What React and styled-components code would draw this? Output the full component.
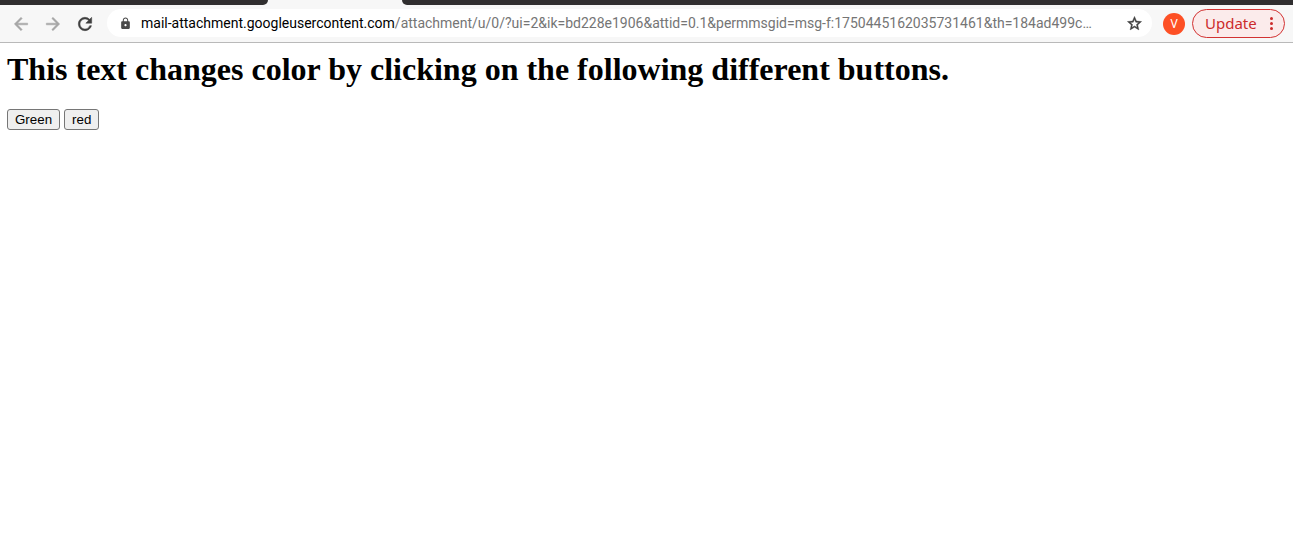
import React, { useState } from "react";
import styled, { createGlobalStyle } from "styled-components";
import { MdArrowBack, MdArrowForward, MdRefresh, MdLock, MdStarBorder } from "react-icons/md";

const GlobalStyle = createGlobalStyle`
  * { box-sizing: border-box; }
  body { margin: 0; background: #fff; }
`;

const TabStrip = styled.div`
  display: flex;
  height: 5px;
  background: #f7f7f7;
`;

const StripSegment = styled.div`
  flex: ${(p) => (p.$grow ? "1" : "0 0 268px")};
  background: #302e2f;
  border-radius: ${(p) => (p.$grow ? "0 0 0 5px" : "0 0 5px 0")};
`;

const ActiveTab = styled.div`
  flex: 0 0 134px;
`;

const Toolbar = styled.header`
  display: flex;
  align-items: center;
  padding: 4px 8px 4px 10px;
  background: #f7f7f7;
  border-bottom: 1px solid #b9b9b9;
`;

const NavGroup = styled.nav`
  display: flex;
  gap: 10px;
  margin-right: 11px;
`;

const IconButton = styled.button`
  display: flex;
  align-items: center;
  justify-content: center;
  width: 22px;
  height: 22px;
  padding: 0;
  border: 0;
  background: none;
  color: ${(p) => (p.$dim ? "#a6a6a6" : "#3f3f3f")};
  flex: none;

  path:not([fill="none"]) {
    stroke: currentColor;
    stroke-width: 0.6;
  }
`;

const AddressBar = styled.div`
  display: flex;
  align-items: center;
  align-self: flex-start;
  flex: 1;
  min-width: 0;
  height: 28px;
  padding: 0 7px 0 12px;
  border-radius: 14px;
  background: #fff;
  color: #4a4a4a;
`;

const Address = styled.div`
  flex: 1;
  min-width: 0;
  margin: 0 8px 0 9px;
  overflow: hidden;
  white-space: nowrap;
  font-family: Roboto, sans-serif;
  font-size: 14px;
  line-height: 20px;
  color: #757575;
`;

const Host = styled.span`
  color: #000;
`;

const Avatar = styled.button`
  width: 22px;
  height: 22px;
  margin: 0 7px 0 11px;
  padding: 0;
  border: 0;
  border-radius: 50%;
  background: #fd5025;
  color: #fff;
  font: 12px/22px "Noto Sans", sans-serif;
`;

const UpdateButton = styled.button`
  display: flex;
  align-items: center;
  justify-content: space-between;
  width: 93px;
  height: 29px;
  padding: 0 11px 0 12px;
  border: 1px solid #d23232;
  border-radius: 15px;
  background: #fbebeb;
  color: #cc2b2b;
  font: 15px/20px "Noto Sans", sans-serif;
`;

const UpdateLabel = styled.span`
  padding-bottom: 2px;
`;

const Page = styled.main`
  padding: 8px 7px;
`;

const Title = styled.h1`
  margin: 0 0 21px;
  font: bold 32px/37px "Liberation Serif", serif;
  color: ${(p) => p.$color};
`;

const Choices = styled.div`
  display: flex;
  gap: 4px;
`;

const ColorButton = styled.button`
  height: 21px;
  padding: 0 7px;
  border: 1px solid #767676;
  border-radius: 3px;
  background: #efefef;
  color: #000;
  font-family: "Liberation Sans", sans-serif;
`;

export default function App() {
  const [color, setColor] = useState("#000");
  return (
    <>
      <GlobalStyle />
      <TabStrip>
        <StripSegment />
        <ActiveTab />
        <StripSegment $grow />
      </TabStrip>
      <Toolbar>
        <NavGroup aria-label="History">
          <IconButton $dim aria-label="Back"><MdArrowBack size={20} /></IconButton>
          <IconButton $dim aria-label="Forward"><MdArrowForward size={20} /></IconButton>
          <IconButton aria-label="Reload"><MdRefresh size={20} /></IconButton>
        </NavGroup>
        <AddressBar>
          <MdLock size={13} />
          <Address role="textbox" aria-label="Address" tabIndex={0}>
            <Host>mail-attachment.googleusercontent.com</Host>
            /attachment/u/0/?ui=2&amp;ik=bd228e1906&amp;attid=0.1&amp;permmsgid=msg-f:1750445162035731461&amp;th=184ad499c…
          </Address>
          <IconButton aria-label="Bookmark this page"><MdStarBorder size={17} /></IconButton>
        </AddressBar>
        <Avatar aria-label="Profile V">V</Avatar>
        <UpdateButton>
          <UpdateLabel>Update</UpdateLabel>
          <svg width="3" height="13" viewBox="0 0 3 13" fill="currentColor" aria-hidden="true">
            <circle cx="1.5" cy="1.5" r="1.5" />
            <circle cx="1.5" cy="6.5" r="1.5" />
            <circle cx="1.5" cy="11.5" r="1.5" />
          </svg>
        </UpdateButton>
      </Toolbar>
      <Page>
        <Title $color={color}>This text changes color by clicking on the following different buttons.</Title>
        <Choices>
          <ColorButton onClick={() => setColor("green")}>Green</ColorButton>
          <ColorButton onClick={() => setColor("red")}>red</ColorButton>
        </Choices>
      </Page>
    </>
  );
}
